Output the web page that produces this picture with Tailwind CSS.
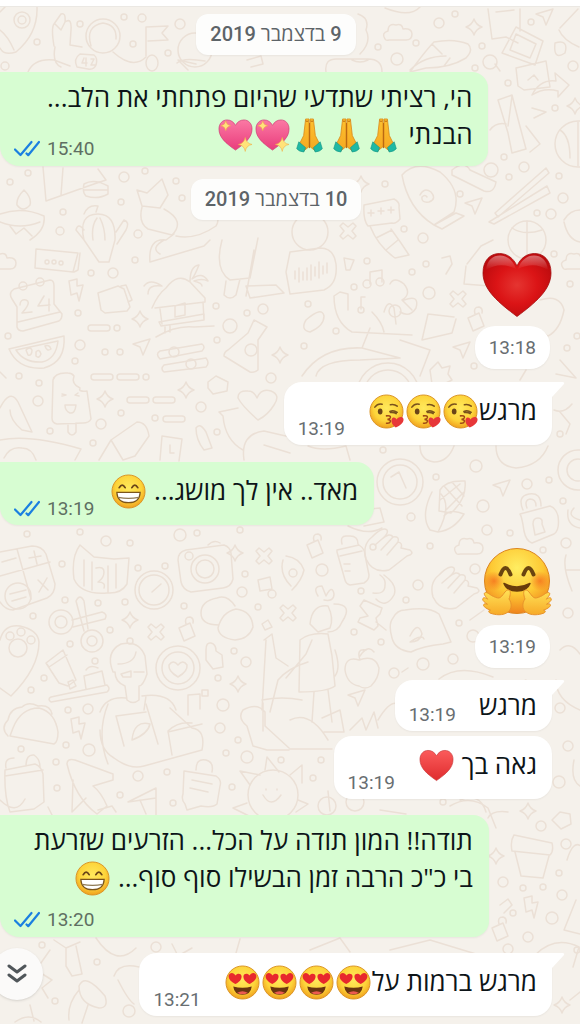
<!DOCTYPE html>
<html lang="he" dir="rtl">
<head>
<meta charset="utf-8">
<meta name="viewport" content="width=device-width, initial-scale=1">
<title>צ'אט</title>
<script src="https://cdn.jsdelivr.net/npm/@tailwindcss/browser@4"></script>
</head>
<body class="bg-[#f5f1eb] font-['Open_Sans','Noto_Sans',sans-serif] text-[#0d1418]">

<!-- Shared emoji and icon symbols -->
<svg class="absolute size-0" aria-hidden="true">
  <defs>
    <radialGradient id="face" cx=".5" cy=".4" r=".6"><stop offset="0" stop-color="#ffe95c"/><stop offset=".65" stop-color="#fdd43a"/><stop offset="1" stop-color="#f0a01e"/></radialGradient>
    <radialGradient id="hugface" cx=".5" cy=".3" r=".72"><stop offset="0" stop-color="#ffee62"/><stop offset=".55" stop-color="#fdc934"/><stop offset="1" stop-color="#ef7f1c"/></radialGradient>
    <radialGradient id="blush"><stop offset="0" stop-color="#f4691c" stop-opacity=".75"/><stop offset="1" stop-color="#f4691c" stop-opacity="0"/></radialGradient>
    <radialGradient id="deepred" cx=".5" cy=".5" r=".6"><stop offset="0" stop-color="#e53531"/><stop offset=".5" stop-color="#db1416"/><stop offset="1" stop-color="#b80a0d"/></radialGradient>
    <linearGradient id="gloss" x1="0" y1="0" x2="0" y2="1"><stop offset="0" stop-color="#fff" stop-opacity=".4"/><stop offset="1" stop-color="#fff" stop-opacity="0"/></linearGradient>
    <linearGradient id="softred" x1="0" y1="0" x2="0" y2="1"><stop offset="0" stop-color="#fb5b5b"/><stop offset="1" stop-color="#df2c2e"/></linearGradient>
    <linearGradient id="pink" x1="0" y1="0" x2="0" y2="1"><stop offset="0" stop-color="#fb79a4"/><stop offset="1" stop-color="#e93c7c"/></linearGradient>
    <linearGradient id="skin" x1="0" y1="0" x2="0" y2="1"><stop offset="0" stop-color="#fdc02f"/><stop offset="1" stop-color="#f5a922"/></linearGradient>
    <linearGradient id="palm" x1="0" y1="0" x2="0" y2="1"><stop offset="0" stop-color="#ffe257"/><stop offset="1" stop-color="#f7aa28"/></linearGradient>

    <symbol id="grin" viewBox="0 0 36 36">
      <circle cx="18" cy="18" r="17" fill="url(#face)" stroke="#d99325"/>
      <path d="M8.500 14q3-5 6 0M21.500 14q3-5 6 0" fill="none" stroke="#6a4518" stroke-width="1.900" stroke-linecap="round"/>
      <path d="M6 19h24q-.5 10.500-12 10.500T6 19z" fill="#fff" stroke="#7c551c" stroke-width="1.300"/>
      <path d="M7.500 24q10.500 2.200 21 0" fill="none" stroke="#8f7a55" stroke-width="1.200"/>
    </symbol>
    <symbol id="kiss" viewBox="0 0 36 36">
      <circle cx="18" cy="18" r="17" fill="url(#face)" stroke="#d99325"/>
      <ellipse cx="11.500" cy="18" rx="2.400" ry="3" fill="#6a4518"/>
      <path d="M6 13.500q3-4 7.500-3M22 11q4-1 7 1.500M21.500 18q3.500-2 7.500.8M22 19q4-.4 6 1.200" fill="none" stroke="#7a521c" stroke-width="1.600" stroke-linecap="round"/>
      <path d="M18 22.500q4.500-.6 4 1.800-.4 1.700-3 1.800 3.400.2 3 2.300-.6 2-4 1.600" fill="none" stroke="#a04a17" stroke-width="1.600" stroke-linecap="round"/>
      <path d="M27.500 34.500C23 31 22.500 27.800 23.500 25.500c1-2 4-1.700 4.800.8 1.200-2.300 5.500-3.800 7-1 1.200 3.200-2.600 7-7.800 9.200z" fill="#e73739"/>
    </symbol>
    <symbol id="love" viewBox="0 0 36 36">
      <circle cx="18" cy="18" r="17" fill="url(#face)" stroke="#d99325"/>
      <path d="M10.500 19.500C5.500 17 2.800 13.500 4 10.300c1.200-3 5.300-2.800 6.700.5 1.800-2.600 5.800-2.600 6.300.6.400 3.200-2.500 6.400-6.500 8.100zM25.500 19.500c5-2.500 7.700-6 6.500-9.200-1.200-3-5.300-2.800-6.700.5-1.800-2.600-5.800-2.600-6.300.6-.4 3.200 2.500 6.400 6.500 8.100z" fill="#e8282d"/>
      <path d="M8.500 22q9.500 3 19 0-1 8.500-9.500 8.500T8.500 22z" fill="#69350f"/>
      <path d="M12.500 28.600q5.500-3.300 11 0-5.500 3.200-11 0z" fill="#ec5a50"/>
    </symbol>
    <symbol id="heart" viewBox="0 0 36 36">
      <path d="M18 33.500C8 26.500 1 20.500 1 11.800 1 6 4.800 2.500 9.300 2.500c3.600 0 6.900 1.900 8.700 5.600 1.800-3.700 5.100-5.600 8.700-5.600C31.200 2.500 35 6 35 11.800c0 8.700-7 14.700-17 21.700z" fill="url(#softred)" stroke="#c9393b" stroke-width=".7"/>
    </symbol>
    <symbol id="sparkheart" viewBox="0 0 36 36">
      <path d="M18 33C8 26 1 20 1 11.300 1 5.500 4.800 2 9.300 2c3.600 0 6.900 1.900 8.700 5.600C19.800 3.900 23.100 2 26.700 2 31.200 2 35 5.500 35 11.300 35 20 28 26 18 33z" fill="url(#pink)" stroke="#cf3b74" stroke-width=".7"/>
      <path d="M8 3q.7 4.200 5 5-4.300.8-5 5-.7-4.200-5-5 4.300-.8 5-5zM28 20q1 6 7 7.200-6 1-7 7.200-1-6.200-7-7.200 6-1.200 7-7.200z" fill="#ffe37a" stroke="#f0b04a" stroke-width=".6"/>
    </symbol>
    <symbol id="pray" viewBox="0 0 36 36">
      <path d="M14 1h3.500v28.500l-5 4L7.500 27 12 18zM22 1h-3.500v28.500l5 4 5-6.500-4.500-9z" fill="url(#skin)" stroke="#d98618" stroke-width=".8" stroke-linejoin="round"/>
      <path d="M18 5v26M14 3q1.500 1 3 0M19 3q1.500 1 3 0" fill="none" stroke="#b9660f" stroke-width="1"/>
      <path d="M7 24.500l7 6-1.800 4.500Q7 34.500 4.800 31.500zM29 24.500l-7 6 1.800 4.500q5.200-.5 7.400-3.500z" fill="#1fb9a4" stroke="#13917f" stroke-width=".6"/>
    </symbol>
    <symbol id="bigheart" viewBox="0 0 70 66">
      <path d="M35 64.500C17 51 1 38 1 21 1 8.500 8 1.500 17.500 1.500 25 1.500 31.500 6 35 14 38.500 6 45 1.500 52.500 1.500 62 1.500 69 8.500 69 21c0 17-16 30-34 43.500z" fill="url(#deepred)" stroke="#a50d0e" stroke-width=".8"/>
      <path d="M4 18C5 8 11 3.500 18 3.500S31 8 34 17Q18 9 4 18zM66 18C65 8 59 3.500 52 3.500S39 8 36 17q16-8 30 1z" fill="url(#gloss)"/>
    </symbol>
    <symbol id="hug" viewBox="0 0 70 70">
      <circle cx="35" cy="34" r="32.500" fill="url(#hugface)" stroke="#dc8520"/>
      <circle cx="12" cy="34" r="10" fill="url(#blush)"/><circle cx="58" cy="34" r="10" fill="url(#blush)"/>
      <path d="M18.500 27.500q5-13 10 0M41.500 27.500q5-13 10 0" fill="none" stroke="#6a4510" stroke-width="4" stroke-linecap="round"/>
      <path d="M22 36.500q13 7 26 0-3 7.500-13 7.500t-13-7.500z" fill="#6a3c0b" stroke="#6a3c0b" stroke-width="1.500" stroke-linejoin="round"/>
      <g fill="url(#palm)" stroke="#e8932a" stroke-linejoin="round">
        <path id="palmshape" d="M27 43c2 1 1.500 5 0 9 3 4 3 10-1 13-5 4-13 3-18 1-2-1-1.500-3 .5-2.800C5 62 2 60 1.500 58.500c0-2 2-2 4-1.200C3 55.500.5 54 .7 52c.6-2 2.800-1.400 5 .2C4 50 1.500 47.500 2.500 46c1.500-1.500 4 .5 7 2.500 3 1.500 5 2.500 7.500 2.500 4-1 6-9 10-8z"/>
        <use href="#palmshape" transform="matrix(-1 0 0 1 70 0)"/>
      </g>
    </symbol>
    <symbol id="ticks" viewBox="0 0 26 18">
      <path d="M1 9.500L6.500 15 17.500 2M12.500 13.500l1.700 1.700L25 2" fill="none" stroke="#1b7fe0" stroke-width="2.200" stroke-linecap="round" stroke-linejoin="round"/>
    </symbol>
  </defs>
</svg>

<main class="relative flex min-h-screen flex-col overflow-hidden">

  <!-- Doodle wallpaper -->
  <svg class="absolute inset-0 h-full w-full" viewBox="0 0 580 1024" preserveAspectRatio="xMidYMin slice" fill="none" stroke="#ebe0d6" stroke-width="1.500" stroke-linecap="round" stroke-linejoin="round" aria-hidden="true">
    <defs>
      <path id="d-star" d="M0-8Q2-2 8 0 2 2 0 8-2 2-8 0-2-2 0-8z"/>
      <path id="d-arrow" d="M-9-3L8-8 1 8-2 0z"/>
      <path id="d-cross" d="M-8-5l3-3 5 4 5-4 3 3-4 5 4 5-3 3-5-4-5 4-3-3 4-5z"/>
      <path id="d-cloud" d="M-13 6q-4-6 3-8 0-8 8-6 6-2 7 4 9-1 9 5t-6 6h-17q-3 1-4-1z"/>
      <path id="d-bolt" d="M-7-9l8-2 0 7 6-1-4 16-2-8-6 2z"/>
      <path id="d-lock" d="M-7-3L4-8l5 13-11 5zM0-7q-2-7 4-7 4 1 3 6"/>
      <path id="d-hand" d="M-19 8Q-23-6-13-14-2-25 2-21 4-18-3-12q8-7 11-2 7-1 5 5 5 1 3 6l9 2q5 4-3 6Q8 16 4 19-12 23-19 8zM-3-12l-7 6M8-14L-4-1M13-9L2 4"/>
    </defs>
    <!-- Dots -->
    <g>
      <circle cx="37" cy="42" r="3"/><circle cx="80" cy="24" r="3"/><circle cx="124" cy="17" r="3"/><circle cx="142" cy="18" r="4"/><circle cx="133" cy="44" r="3"/><circle cx="168" cy="53" r="3"/><circle cx="180" cy="24" r="5"/><circle cx="5" cy="66" r="4"/>
      <circle cx="439" cy="23" r="5"/><circle cx="378" cy="47" r="3"/><circle cx="416" cy="43" r="3"/><circle cx="397" cy="59" r="6"/><circle cx="455" cy="14" r="3"/><circle cx="482" cy="46" r="3"/><circle cx="475" cy="68" r="3"/><circle cx="531" cy="22" r="3"/><circle cx="573" cy="66" r="5"/><circle cx="508" cy="83" r="3"/><circle cx="555" cy="108" r="3"/><circle cx="504" cy="157" r="3"/><circle cx="524" cy="167" r="5"/><circle cx="491" cy="170" r="7"/><circle cx="509" cy="177" r="3"/><circle cx="559" cy="176" r="3"/><circle cx="563" cy="198" r="5"/><circle cx="460" cy="194" r="3"/><circle cx="385" cy="184" r="3"/><circle cx="537" cy="213" r="3"/><circle cx="551" cy="214" r="5"/><circle cx="404" cy="229" r="3"/><circle cx="423" cy="238" r="5"/>
      <circle cx="10" cy="182" r="3"/><circle cx="28" cy="173" r="3"/><circle cx="124" cy="177" r="5"/><circle cx="145" cy="171" r="3"/><circle cx="176" cy="181" r="3"/><circle cx="121" cy="202" r="3"/><circle cx="182" cy="198" r="3"/><circle cx="63" cy="212" r="3"/><circle cx="60" cy="231" r="4"/><circle cx="138" cy="234" r="4"/>
      <circle cx="91" cy="273" r="3"/><circle cx="113" cy="273" r="5"/><circle cx="135" cy="260" r="3"/><circle cx="78" cy="313" r="3"/><circle cx="117" cy="328" r="3"/><circle cx="8" cy="336" r="3"/><circle cx="80" cy="345" r="5"/><circle cx="75" cy="361" r="3"/><circle cx="105" cy="352" r="3"/><circle cx="120" cy="352" r="3"/><circle cx="19" cy="376" r="3"/><circle cx="39" cy="383" r="3"/><circle cx="146" cy="377" r="3"/><circle cx="38" cy="401" r="5"/><circle cx="121" cy="413" r="3"/><circle cx="101" cy="424" r="5"/><circle cx="50" cy="431" r="3"/><circle cx="93" cy="443" r="3"/><circle cx="155" cy="418" r="3"/><circle cx="201" cy="407" r="5"/><circle cx="217" cy="432" r="3"/><circle cx="216" cy="306" r="3"/><circle cx="230" cy="326" r="7"/><circle cx="247" cy="313" r="3"/><circle cx="263" cy="309" r="5"/><circle cx="217" cy="340" r="3"/><circle cx="271" cy="378" r="5"/>
      <circle cx="367" cy="261" r="3"/><circle cx="354" cy="287" r="3"/><circle cx="308" cy="304" r="3"/><circle cx="336" cy="331" r="3"/><circle cx="304" cy="346" r="3"/><circle cx="412" cy="272" r="3"/><circle cx="426" cy="264" r="3"/><circle cx="429" cy="293" r="6"/><circle cx="554" cy="254" r="3"/><circle cx="570" cy="284" r="3"/><circle cx="567" cy="348" r="3"/><circle cx="577" cy="336" r="3"/><circle cx="474" cy="366" r="3"/><circle cx="560" cy="434" r="3"/><circle cx="383" cy="450" r="3"/><circle cx="476" cy="466" r="6"/><circle cx="436" cy="477" r="3"/><circle cx="527" cy="484" r="5"/><circle cx="549" cy="480" r="3"/><circle cx="483" cy="506" r="6"/><circle cx="411" cy="517" r="4"/><circle cx="487" cy="530" r="5"/><circle cx="510" cy="533" r="3"/><circle cx="563" cy="501" r="3"/><circle cx="566" cy="543" r="5"/><circle cx="543" cy="550" r="3"/><circle cx="430" cy="546" r="3"/><circle cx="475" cy="569" r="5"/><circle cx="418" cy="585" r="5"/><circle cx="406" cy="600" r="3"/><circle cx="373" cy="547" r="3"/><circle cx="322" cy="570" r="6"/><circle cx="361" cy="591" r="3"/><circle cx="354" cy="632" r="3"/><circle cx="381" cy="642" r="3"/><circle cx="459" cy="623" r="3"/><circle cx="473" cy="636" r="6"/><circle cx="423" cy="664" r="6"/><circle cx="453" cy="659" r="5"/><circle cx="394" cy="673" r="5"/><circle cx="568" cy="613" r="5"/>
      <circle cx="27" cy="534" r="3"/><circle cx="80" cy="532" r="3"/><circle cx="106" cy="541" r="5"/><circle cx="130" cy="543" r="3"/><circle cx="180" cy="535" r="6"/><circle cx="197" cy="533" r="3"/><circle cx="240" cy="530" r="3"/><circle cx="62" cy="564" r="3"/><circle cx="138" cy="568" r="3"/><circle cx="165" cy="566" r="3"/><circle cx="245" cy="574" r="3"/><circle cx="242" cy="592" r="5"/><circle cx="65" cy="600" r="3"/><circle cx="98" cy="603" r="3"/><circle cx="125" cy="602" r="3"/><circle cx="184" cy="606" r="3"/><circle cx="258" cy="607" r="3"/><circle cx="33" cy="616" r="3"/><circle cx="110" cy="630" r="3"/><circle cx="130" cy="641" r="3"/><circle cx="70" cy="644" r="3"/><circle cx="95" cy="661" r="3"/><circle cx="44" cy="678" r="3"/><circle cx="31" cy="690" r="3"/><circle cx="234" cy="651" r="3"/><circle cx="246" cy="662" r="5"/><circle cx="218" cy="678" r="3"/><circle cx="223" cy="705" r="6"/>
      <circle cx="68" cy="710" r="3"/><circle cx="88" cy="709" r="5"/><circle cx="66" cy="745" r="3"/><circle cx="89" cy="750" r="6"/><circle cx="21" cy="749" r="3"/><circle cx="56" cy="762" r="3"/><circle cx="57" cy="788" r="3"/><circle cx="138" cy="776" r="5"/><circle cx="167" cy="772" r="3"/><circle cx="120" cy="795" r="3"/><circle cx="173" cy="803" r="3"/><circle cx="220" cy="728" r="5"/><circle cx="238" cy="740" r="3"/><circle cx="226" cy="753" r="3"/><circle cx="247" cy="757" r="6"/><circle cx="281" cy="760" r="3"/><circle cx="232" cy="787" r="3"/><circle cx="313" cy="778" r="3"/><circle cx="321" cy="760" r="3"/><circle cx="560" cy="708" r="5"/><circle cx="568" cy="746" r="5"/><circle cx="559" cy="782" r="6"/><circle cx="443" cy="802" r="3"/><circle cx="541" cy="826" r="5"/><circle cx="566" cy="844" r="5"/><circle cx="559" cy="873" r="3"/><circle cx="503" cy="882" r="5"/><circle cx="523" cy="888" r="3"/><circle cx="543" cy="887" r="3"/><circle cx="562" cy="895" r="5"/><circle cx="513" cy="913" r="3"/><circle cx="552" cy="918" r="6"/><circle cx="528" cy="937" r="5"/><circle cx="508" cy="949" r="5"/><circle cx="577" cy="950" r="3"/><circle cx="42" cy="945" r="3"/><circle cx="97" cy="962" r="3"/><circle cx="55" cy="1001" r="3"/><circle cx="129" cy="1011" r="6"/><circle cx="156" cy="947" r="5"/>
    </g>
    <!-- Sparkles, arrows, crosses, clouds, bolts -->
    <use href="#d-star" x="474" y="27"/><use href="#d-star" x="575" y="106"/><use href="#d-star" x="140" y="319"/><use href="#d-star" x="105" y="399"/><use href="#d-star" x="186" y="390"/><use href="#d-star" x="280" y="355"/><use href="#d-star" x="235" y="553"/><use href="#d-star" x="130" y="620"/><use href="#d-star" x="238" y="684"/><use href="#d-star" x="528" y="811"/><use href="#d-star" x="496" y="856"/><use href="#d-star" x="562" y="1005"/><use href="#d-star" x="361" y="184"/>
    <use href="#d-arrow" x="545" y="17"/><use href="#d-arrow" x="474" y="206"/><use href="#d-arrow" x="142" y="347"/><use href="#d-arrow" x="462" y="350"/><use href="#d-arrow" x="502" y="488"/><use href="#d-arrow" x="357" y="698"/>
    <use href="#d-cross" x="458" y="299"/><use href="#d-cross" x="264" y="556"/><use href="#d-cross" x="156" y="632"/><use href="#d-cross" x="348" y="231"/><use href="#d-cross" x="288" y="613"/>
    <use href="#d-cloud" x="398" y="33"/><use href="#d-cloud" x="469" y="547"/><use href="#d-cloud" x="576" y="262"/><use href="#d-cloud" x="2" y="262"/>
    <use href="#d-bolt" x="76" y="290"/><use href="#d-bolt" x="78" y="728"/><use href="#d-bolt" x="531" y="907"/>
    <use href="#d-lock" x="186" y="631"/><use href="#d-lock" x="475" y="321"/><use href="#d-lock" x="314" y="548"/><use href="#d-lock" x="499" y="931"/>
    <use href="#d-hand" x="385" y="551"/><use href="#d-hand" x="452" y="589"/>
    <!-- Rocket, astronaut, flag, planet -->
    <circle cx="22" cy="20" r="8"/><circle cx="22" cy="20" r="4"/>
    <path d="M0 48q4 8 16 4Q38 34 37 7M0 12l5-5M0 30q8 6 14 20M28 72q6-14 26-12l16 6M54 46q-3-18 0-22l7-10q5-2 4 8 7-5 6 8l-1 15 12 2M55 47q-3 16 6 20M55 24l6 6 4-8"/>
    <circle cx="103" cy="36" r="17"/><path d="M91 46q-6-20 12-23 14 2 13 16M113 52q20 18 33 5M80 54l14 1q4 3 2 10-2 5-8 4l-11-2q-4-8 3-13zM84 58l-2 5h5M86 58v8M91 59h3l-3 6h4M146 56V27l22-1-6 7 6 7-20 1"/>
    <ellipse cx="152" cy="63" rx="6" ry="8"/><circle cx="195" cy="50" r="17"/><path d="M177 63q6-6 28-2M188 70l-10-10 18 4M247 60l14-4 2 8-12 3M358 14q12 4 8 16 6 12-6 24M326 72q-2-14 12-13h30q14 0 14 13M352 60q8 4 16 0"/>
    <!-- Whale, photos, meteor -->
    <path d="M385 8q25 10 35-1M410 72q16-22 24-30 20-4 34 2 6 6-2 14-16 10-40 10zM410 70q14-14 36-14M432 44l10 10M450 58l-6 8M488 9l4 30 14-2 12 6M520 9v22M496 12l18-2M516 27l27 14-8 24-33-12zM516 34l20 10-6 14-20-8zM516 68l30-7 4 26-26 3-6-4zM528 80l6-5 4 5M560 28l18-19M559 30q4 10 20 17M555 43q14-4 10 10-12 8-10-10zM532 95q8-16 24-14l-1-8 14 12-11 12v-6q-14-4-26 4M495 64l5 7M498 100l14-5 6 24 8 30-14 4-4-20zM512 96l-4 30M490 130q6-8 16-6M532 108l14 4-12 6M526 126l14 18-10 8"/>
    <circle cx="490" cy="62" r="7"/><circle cx="578" cy="144" r="23"/><path d="M560 130q10 6 10 28M578 122v44"/>
    <!-- Cap, shoe, candle, fox, cactus -->
    <path d="M43 167l3 34 48-17 12-4-8-11M63 168l-2 27M84 184q10-6 24 2v8q-10 6-22 2-4-4-2-12zM84 190h24M24 190q-8 8-7 15 6 8 13 0 2-7-6-15zM0 214q22-8 44 2 2 14-14 24M0 222q20 8 40 0M10 226l6 8 8-6 8 8M137 190l10 3 15-14 6 16-8 13-18-2zM142 207q-4 16 6 22l24 6q14-14-8-26M176 236q20 4 40-10 6-10-6-16"/>
    <path d="M84 240q-6-26 14-26 18 0 17 26l-6 22h-10zM93 240q-2-14 4-22M105 240q0-12-5-22M84 214q4-10 14-8l-2 6M116 232l8-12q6 2 2 10l-9 14M84 240l-8-10q2-8 8 0M150 262q-2-24 16-22l8-6M150 262l54-16 6-6M164 240q-14 8-4 14"/>
    <!-- Vase, stars box, chopsticks, ball -->
    <path d="M402 175q14-16 38-3 22 18 14 40l-20 13q-26-16-32-50zM434 225l22-12 8 3-22 13zM420 195q4-8 11-3 6 7-2 10-8 1-7-5 3-3 5 0M452 170q12-10 18 0l26 12q-2 12-12 9l-32-16zM364 205l30-6q6 3 5 8l1 12q-4 5-8 4l-24 3q-5-6-4-21zM371 210v6M368 213h6M381 208v6M378 211h6M391 207v6M388 210h6M495 213l51-45 3 5-51 44zM489 222l58-36 3 7-56 31zM340 200l14-6 4 6 0 10-12 4-6-6z"/>
    <circle cx="527" cy="240" r="19"/><path d="M512 228q12 8 30 2M527 221v38"/><circle cx="310" cy="232" r="18"/><path d="M564 220q6-10 16-10M564 222q4 18 16 20"/>
    <!-- Chat box, calendar, card, hut -->
    <path d="M36 249l42 4-5 19-38-4zM74 272l4-2 2-17M14 289l36-9q4 0 4 6v18l8 10q0 5-3 7l-36 10q-5 0-6-4v-20l-5-8q-4-6 2-10zM18 322l42-10M20 305q0-6 6-5 6 2-4 13l10-1M44 296l-6 10 12-1M49 299v12"/>
    <circle cx="47" cy="262" r="2"/><circle cx="54" cy="262" r="2"/><circle cx="61" cy="263" r="2"/><circle cx="23" cy="286" r="4"/><circle cx="40" cy="282" r="4"/>
    <path d="M98 293l20-7 6 3 6 18-3 4-22 2-4-3zM121 286l5-1 6 15-4 2M152 308q6-14 14-20 12-16 24-6l15 16v4l-50 6M160 309l2 15M203 302l1 18M159 322l45-8v6l-43 6zM165 327v6M170 326v6M175 306l10-3v12l-10 2zM156 337q20-12 38-10l20-1M144 286q6-8 18 0-14-2-14 8M190 282q0-16 9-17-4 10-7 14 10-8 16 2-6-3-14 0 8 2 8 5"/>
    <!-- Melon, morse strips, ice pop, keys -->
    <path d="M9 349l55-13q2 26-20 32-26 2-35-19zM16 350l42-9q-2 18-16 21-18 1-26-12zM26 350q4-4 6 0 0 6-4 5zM36 352q3-4 5 2-2 5-5 2zM45 346q4-2 6 3-4 3-6-3zM53 380q2-8 15-7 4 0 6 3-3 8 6 12-2 4 7 3l4 28q-2 4-8 4l-26 1q-5-1-5-6zM68 424v8q4 6 8 0v-9M62 394l4 1-4 1M78 393l-3 2 4 1M65 405h11q-1 9-6 8-5-2-5-8z"/>
    <rect x="88" y="325" width="22" height="6" rx="3"/><rect x="91" y="374" width="22" height="6" rx="3"/><rect x="117" y="374" width="22" height="6" rx="3"/><rect x="127" y="397" width="22" height="6" rx="3"/><rect x="153" y="397" width="22" height="6" rx="3"/><rect x="163" y="416" width="22" height="6" rx="3"/>
    <path d="M160 351l42-7q4 3 0 7l-42 8q-5-5 0-8zM164 365l42-7q4 5 0 9l-42 5q-4-3 0-7zM208 382l8-6 12 6-1 9-14 3-5-6zM254 320l13 7-9 13v30q-4 3-8 2l-26-16q0-4 4-6l20-17z"/><circle cx="174" cy="352" r="5"/><circle cx="191" cy="364" r="5"/><circle cx="251" cy="350" r="6"/>
    <path d="M258 420q-16-14-20-22 0-8 10-7 6 0 9 7 4-10 14-7 10 4 3 14-6 10-16 15zM238 408l-19 4 4 4q2 24 20 34M244 460q-4-26 20-29l26 6M264 445l26 8M0 440q30-6 81 9l-6 11M4 458q6-12 18-10 10 0 14 12M111 440l26-18q10 0 12 14l-14 20-12 4zM111 440l-12 20M162 436l20 3-3 22M162 436l-2 24M170 445v8h4M196 428q4-6 10 4l6 16-8 2q-8-10-8-22M0 408q10-20 18-6l14 30-10-2q-12-10-12-20M0 372l6 6"/>
    <!-- Seated figure, waveform bubble, shell -->
    <path d="M222 240q-8 30 8 40l20-2 8-40M226 281l-2 14q6 6 12 0l4-16M246 286l30-1 8 8-34 5zM254 250l-8 46M290 252l30-4q14 0 16 16 2 20-12 26l-34 4-4-22zM295 271v8M299 268v14M303 272v8M307 268v12M311 265v15M315 267v9M319 262v16M323 266v8M327 263v10M370 226q8 20 25 32l14-3-8-12-10-14M376 238l16-8M386 250l12-10M344 258l10 2-4 10h-4zM442 258l8-2 2 8-6 10M467 264l14-18 12-6M466 266l-2 18 26 2"/>
    <!-- Music, juggler, wheel -->
    <path d="M370 284v-12l12-2v12M361 309v-12l4 0M334 296q0 26 18 36l60 3M334 296l6-4 8 2v16M390 284q4-8 14 0 8 10-2 16l10 10M384 312q4-14 10-4l2 16M404 300q16-6 12 8-6 10-16 4M428 314l26 3M428 314l-6 26 30-7 4-14M362 348l8-20M400 340l30 10-10 26M302 376q20-30 60-28l38 10-40 2q-40 0-44 16M306 320q16-14 18-4 0 10-14 16-10-2-4-12M372 312q10 10 12 20"/><circle cx="367" cy="284" r="4"/><circle cx="380" cy="282" r="4"/><circle cx="361" cy="310" r="3"/><circle cx="395" cy="311" r="6"/><circle cx="388" cy="394" r="31"/><circle cx="388" cy="394" r="24"/>
    <path d="M430 370l8-8 4 6 8-2-2 8 4 6-8 4-6 6-6-6zM520 380l6-10M540 300q20-6 24 10-4 20-16 26l-12-8M560 360l16 18-20-4M308 446q14 6 38 0l4 14M420 446q0 14 14 16 14 0 20-16M554 410q10 4 18-6M560 412l10 12-4 10M496 446q0 20 20 22 24-2 32-22"/><circle cx="578" cy="470" r="20"/><circle cx="578" cy="470" r="11"/>
    <!-- Coin, corn, padlock, bottle -->
    <circle cx="400" cy="482" r="23"/><circle cx="400" cy="482" r="17"/><path d="M391 477l8-5 7 16M440 490q6-10 25-9 2 18-14 32l-12-2zM444 486l18 20M452 482l12 14M440 500l20-16M446 510l18-18M432 492q-12 24-2 38l8 2q14-26 3-38M438 532q16-2 26-18-14-6-20 2M520 514l30-8q6 2 8 10 2 14-4 18l-22 9q-6-2-8-12-2-14-4-17zM523 510q-6-14 6-16 12-2 12 12M527 508q-3-8 3-9 6 0 6 7M533 524q0-6 5-6t4 6l3 8-10 3zM568 510q-2 16 12 18M574 508q-8 8 6 12M337 550l22-5q6 4 6 10l4 20q0 5-5 8l-14 2q-4-1-5-5l-8-28zM340 556l22-5M342 544q-2-8 4-8l4 0q8 0 8 8M344 564h6M345 571h5M380 575q6 4 5 10 0 10-12 8M384 575q14 10 10 20-8 14-18 4M348 526q20 10 34 2M360 510l20-2 4 14-20 4"/>
    <!-- Cat mask, calculator, dial, camera, dumplings -->
    <path d="M80 545l14 12 20 2 15-1-2 26q-6 10-20 9-26 2-33-14-3-22 6-34zM84 560v26M92 562v28M108 566v26M116 564v24M96 568q8-2 8 4t-6 10q8 0 6 6M0 552l32-6q10 0 14 8l9 30q0 10-8 14l-34 12q-8 0-13-8M17 549l14 50M0 576l50-14M29 558l12-2M34 551l3 13M38 580l10 10M47 578l-8 14M2 562l14-4"/>
    <circle cx="18" cy="596" r="13"/><path d="M10 594l16-4M12 601l14-4"/><circle cx="154" cy="590" r="19"/><circle cx="154" cy="590" r="15"/><path d="M152 592l9-8"/>
    <path d="M178 560q0-8 8-10l38-5q6 2 7 8l2 26q-2 8-10 9l-32 4q-8-2-10-10zM208 545q6-6 12-2"/><circle cx="205" cy="569" r="14"/><circle cx="205" cy="569" r="9"/><circle cx="189" cy="556" r="4"/>
    <path d="M219 625q-18 0-18-12t16-15q10-4 18 8M218 628q4-16 18-19 16 2 17 18-4 12-18 13-16-2-17-12zM258 580l12-3 2 12-12 2zM262 624l6-4 4 7-7 3zM283 560q-4 14 8 26M286 556q14 2 18 14-2 10-12 20"/><circle cx="272" cy="594" r="4"/><circle cx="293" cy="573" r="4"/>
    <!-- Scissors, paw, cup, scholar, heart medal -->
    <circle cx="61" cy="622" r="12"/><circle cx="61" cy="622" r="6"/><circle cx="92" cy="641" r="11"/><circle cx="92" cy="641" r="5"/><path d="M72 620l30-8q6 2 3 7l-32 8M84 631l-8-30q4-8 8 0l4 28M0 640q4-16 20-14 18 4 19 16 0 26-28 54L0 688"/><circle cx="18" cy="648" r="9"/><circle cx="10" cy="636" r="4"/><circle cx="21" cy="632" r="4"/><circle cx="31" cy="640" r="4"/>
    <path d="M46 663l17-13 13 30-8 6-9-3zM46 663l3 4 18-12M68 682l5-2 3 6-6 3zM51 697l56-12q4 4 0 7l-56 10q-4-3 0-5zM84 676l18-5 3 14M84 676l2 13M86 670q4-6 12-2"/>
    <path d="M113 672q-8-20 8-28 18-4 24 12l2 18q-4 12-8 12v14q-6 5-12 0l-2-14q-10-4-10-14zM118 664q16 0 18-12M121 674l10-3v6h-8zM134 672h10M100 712q6-16 26-14M142 696q28-4 34 14M146 696l-2 14"/>
    <circle cx="178" cy="668" r="22"/><circle cx="178" cy="668" r="16"/><path d="M178 677q-10-6-9-12 4-6 9 0 5-6 9 0 1 6-9 12zM206 650q0-8 5-7t5 8l6 4 1 12-10 2-7-9zM188 695l12-1v15M188 695v20M202 690l6 0v6h-6z"/>
    <!-- Woman planting, pin, speech bubble, apple -->
    <path d="M310 624q2-20 18-18 6 12 2 22l-12 4zM318 596q-6-10 4-10l4 10q6-12 8-2 0 8-10 6M334 604q20 0 8 18-4 10-14 10M300 640q10-8 28-6l4 22 3 30q-8 6-36 6zM312 640l-6 14-20 24M270 712l8-32q10-12 30-18M314 692l-2 30M328 690l4 32M335 650q6 18 0 26M264 640l8-6 4 24 12 8M266 640l-4 70M262 700q20-4 40 0"/>
    <path d="M360 606l4-6 18 8-2 6-4 4 2 8-4 4-16-8 2-4 8-2zM376 622l10 8M393 618q4-8 12-8 24-4 34 4l12 28-8 2q-20 2-32 8-16-2-19-14-4-14 1-20zM410 636q8-16 12-2-2 8-12 8 12-8 14-3M345 670q0-14 14-10 16-6 20 8 0 10-8 18-6 4-12 0-12-2-14-16zM360 660q-4-12 6-10M360 656q8-12 14-4M408 668l-6 4M439 679q20-16 54-2M486 698l40-18M470 620l14-10M560 650q10-10 20 4M556 680q0 20 24 30M566 555q-4 12 6 36M566 570h14"/>
    <!-- Taco, backpack, spaceship, books, laptop -->
    <path d="M13 728q8-20 26-20 16 4 19 24 0 10-4 12l-44-8zM8 736q-8-8 0-16 2-12 14-13 6-6 16-1 12-2 14 8M5 770l30-6q6 2 8 10l1 28-10 7-24 3q-6-16-5-42zM5 776l38-6M26 766q0-12 8-11 6 4 6 12M0 800q16 16 25-1M6 768q-2-10 8-10M67 764q0-6 8-4l38 14v6l-20 6q8 6 14 20l-10 8q-22-16-30-50zM73 780l-1 32 14-14M98 810l14-4 4 6M128 802l28-14v30M128 802l28-4M140 800l6 14M184 771l32 5q6 4 4 10l-3 18q-4 4-16 2l-14 4-2-6q-4-4-2-10zM196 770q0-12 10-10 8 2 6 12M192 780l20 4M190 788l18 4M108 704q-12 30 0 60M100 730q0 20 14 28 16 12 30 8l58-16q4-20-10-22l-22-20M124 746l-8-30 30-4M146 704l12 40M168 732l34-8M172 755l-4-24q10-10 24-8M132 740q2-20 18-16-2 10-18 16M48 807l6 12"/>
    <!-- Sandwich, sun, field -->
    <circle cx="273" cy="795" r="25"/><path d="M263 795q8 14 18 0M266 789v1M277 789v1M250 785l-10-14 20 4M265 770l2-13 12 15M247 803l-14 5 16 8M290 775l12-10 0 18M298 800l10 4-12 8M243 710q14-8 22 2l0 14 24 22M243 710q-6 8 4 16l6 20 14 4h22M263 703l0 28M290 720q20-10 38 20M322 718l18-8 4 22h-20M290 749h42M350 730l12-12 4 12 8-18 4 16M378 720q12-20 20-16"/>
    <!-- Plant pot and lower right -->
    <path d="M514 835l38 8q2 8-2 12l-38-4q-2-10 2-16zM515 852l6 24 22 2 6-22M552 820l8-8 10 2 1 10-10 5zM567 860q6-20 14-14M576 900l-12 30 16 4M574 760q-4 20 6 26M450 806q20-12 38 2l8 20M488 818q4-8 20-6M460 800q20-8 26 12M380 810l26 4M330 811l-2-20M500 905l8-6 4 6-8 8M535 955q20-20 44-8l-6 20M310 950l30-12 10 14M390 950l40-10 46 14"/><circle cx="327" cy="806" r="9"/><circle cx="355" cy="802" r="9"/>
    <!-- Mushroom, carrot, tree and lower left -->
    <path d="M79 986q6-14 26 10 4 12-6 12-20-4-20-22zM79 990q-12 14-10 30M88 1005l-6 18M54 940l12 8 14-6M66 948l0 18 6 10 10-2-6-28M114 976q4-12 20-10l20 4M118 980q10 20 16 24M50 950l-14 20 16 10-10 8 6 10M96 938q20 30 40 10M30 1005l4 16M172 944l6 12 14-8M240 939l-4 14M15 1022q14-10 26 0M570 1000l10-8"/>
  </svg>

  <header class="relative h-[7px] border-b border-[#ebe8e3] bg-white"></header>

  <section class="relative flex flex-1 flex-col pt-[7px] pr-[28px] text-[26px] leading-[37px]">
    <time class="self-center rounded-xl bg-[#fdfdfc] px-[14px] font-['Roboto','Open_Sans',sans-serif] text-[20px] font-medium leading-[41px] text-[#5d6468] shadow-xs">9 בדצמבר 2019</time>

    <article class="mt-[17px] grid self-end rounded-2xl rounded-tl-none rounded-bl-[20px] bg-[#d7fdd2] pt-[7px] pr-4 pb-[5px] pl-[14px] shadow-xs">
      <p class="col-start-1 row-start-1 pb-2 pl-[33px]">הי, רציתי שתדעי שהיום פתחתי את הלב...<br>הבנתי <svg class="-my-1 mx-px inline-block size-[35px] align-[-5px]" role="img" aria-label="ידיים"><use href="#pray"/></svg><svg class="-my-1 mx-px inline-block size-[35px] align-[-5px]" role="img" aria-label="ידיים"><use href="#pray"/></svg><svg class="-my-1 mx-px inline-block size-[35px] align-[-5px]" role="img" aria-label="ידיים"><use href="#pray"/></svg><svg class="-my-1 mx-px inline-block size-[35px] align-[-5px]" role="img" aria-label="לב"><use href="#sparkheart"/></svg><svg class="-my-1 mx-px inline-block size-[35px] align-[-5px]" role="img" aria-label="לב"><use href="#sparkheart"/></svg></p>
      <div dir="ltr" class="col-start-1 row-start-1 flex items-center gap-[7px] self-end justify-self-end font-['Roboto',sans-serif] text-[19px] leading-6 text-[#5f6f62]"><svg class="h-[18px] w-[26px]"><use href="#ticks"/></svg><time>15:40</time></div>
    </article>

    <time class="mt-[13px] self-center rounded-xl bg-[#fdfdfc] px-[14px] font-['Roboto','Open_Sans',sans-serif] text-[20px] font-medium leading-[41px] text-[#5d6468] shadow-xs">10 בדצמבר 2019</time>

    <svg class="mt-[32px] h-[66px] w-[70px] self-start" role="img" aria-label="לב אדום"><use href="#bigheart"/></svg>
    <time class="mt-2 mr-0.5 self-start rounded-[20px] bg-white px-[14px] font-['Roboto',sans-serif] text-[19px] leading-[43px] text-[#686e71] shadow-xs">13:18</time>

    <article class="relative mt-[13px] flex items-end gap-[23px] self-start rounded-[18px] rounded-tr-none bg-white pt-[10px] pr-[15px] pb-[4px] pl-[14px] shadow-xs">
      <svg class="absolute top-0 -right-[13px] h-4 w-[14px]" viewBox="0 0 14 16" fill="#fff" aria-hidden="true"><path d="M0 0h12q2 .5 1 2L1 15H0z"/></svg>
      <p class="pb-[12px]">מרגש<svg class="-my-1 mx-px inline-block size-[35px] align-[-5px]" role="img" aria-label="נשיקה"><use href="#kiss"/></svg><svg class="-my-1 mx-px inline-block size-[35px] align-[-5px]" role="img" aria-label="נשיקה"><use href="#kiss"/></svg><svg class="-my-1 mx-px inline-block size-[35px] align-[-5px]" role="img" aria-label="נשיקה"><use href="#kiss"/></svg></p>
      <time class="font-['Roboto',sans-serif] text-[19px] leading-6 text-[#686e71]">13:19</time>
    </article>

    <article class="mt-[17px] flex items-end gap-[16px] self-end rounded-[18px] rounded-tl-none bg-[#d7fdd2] pt-[10px] pr-4 pb-[4px] pl-[14px] shadow-xs">
      <p class="pb-[12px]">מאד.. אין לך מושג... <svg class="-my-1 mx-px inline-block size-[35px] align-[-5px]" role="img" aria-label="חיוך"><use href="#grin"/></svg></p>
      <div dir="ltr" class="flex items-center gap-[7px] font-['Roboto',sans-serif] text-[19px] leading-6 text-[#5f6f62]"><svg class="h-[18px] w-[26px]"><use href="#ticks"/></svg><time>13:19</time></div>
    </article>

    <svg class="mt-[22px] size-[70px] self-start" role="img" aria-label="חיבוק"><use href="#hug"/></svg>
    <time class="mt-2 mr-0.5 self-start rounded-[20px] bg-white px-[14px] font-['Roboto',sans-serif] text-[19px] leading-[43px] text-[#686e71] shadow-xs">13:19</time>

    <article class="relative mt-[12px] flex items-end gap-[23px] self-start rounded-[18px] rounded-tr-none bg-white pt-[7px] pr-[15px] pb-[4px] pl-[14px] shadow-xs">
      <svg class="absolute top-0 -right-[13px] h-4 w-[14px]" viewBox="0 0 14 16" fill="#fff" aria-hidden="true"><path d="M0 0h12q2 .5 1 2L1 15H0z"/></svg>
      <p class="pb-[3px]">מרגש</p>
      <time class="font-['Roboto',sans-serif] text-[19px] leading-6 text-[#686e71]">13:19</time>
    </article>

    <article class="mt-[5px] flex items-end gap-[23px] self-start rounded-[18px] bg-white pt-[10px] pr-[15px] pb-[4px] pl-[14px] shadow-xs">
      <p class="pb-[12px]">גאה בך <svg class="-my-1 mx-px inline-block size-[35px] align-[-5px]" role="img" aria-label="לב"><use href="#heart"/></svg></p>
      <time class="font-['Roboto',sans-serif] text-[19px] leading-6 text-[#686e71]">13:19</time>
    </article>

    <article class="mt-[16px] flex flex-col self-end rounded-2xl rounded-tl-none rounded-bl-[20px] bg-[#d7fdd2] pt-[7px] pr-4 pb-[5px] pl-[14px] shadow-xs">
      <p class="pb-[12px] pl-[20px]">תודה!! המון תודה על הכל... הזרעים שזרעת<br>בי כ"כ הרבה זמן הבשילו סוף סוף... <svg class="-my-1 mx-px inline-block size-[35px] align-[-5px]" role="img" aria-label="חיוך"><use href="#grin"/></svg></p>
      <div dir="ltr" class="flex items-center gap-[7px] self-end font-['Roboto',sans-serif] text-[19px] leading-6 text-[#5f6f62]"><svg class="h-[18px] w-[26px]"><use href="#ticks"/></svg><time>13:20</time></div>
    </article>

    <article class="relative mt-[16px] flex items-end gap-[23px] self-start rounded-[18px] rounded-tr-none bg-white pt-[10px] pr-[15px] pb-[4px] pl-[14px] shadow-xs">
      <svg class="absolute top-0 -right-[13px] h-4 w-[14px]" viewBox="0 0 14 16" fill="#fff" aria-hidden="true"><path d="M0 0h12q2 .5 1 2L1 15H0z"/></svg>
      <p class="pb-[12px]">מרגש ברמות על<svg class="-my-1 mx-px inline-block size-[35px] align-[-5px]" role="img" aria-label="מאוהב"><use href="#love"/></svg><svg class="-my-1 mx-px inline-block size-[35px] align-[-5px]" role="img" aria-label="מאוהב"><use href="#love"/></svg><svg class="-my-1 mx-px inline-block size-[35px] align-[-5px]" role="img" aria-label="מאוהב"><use href="#love"/></svg><svg class="-my-1 mx-px inline-block size-[35px] align-[-5px]" role="img" aria-label="מאוהב"><use href="#love"/></svg></p>
      <time class="font-['Roboto',sans-serif] text-[19px] leading-6 text-[#686e71]">13:21</time>
    </article>
  </section>

  <button type="button" aria-label="גלילה למטה" class="absolute bottom-6 -left-[9px] flex size-[52px] items-center justify-center rounded-full bg-[#fbfaf9] shadow-sm">
    <svg class="h-[22px] w-[20px]" viewBox="0 0 20 22" fill="none" stroke="#50565a" stroke-width="3" stroke-linecap="round" stroke-linejoin="round"><path d="M2 3l8 6 8-6M2 12l8 6 8-6"/></svg>
  </button>
</main>
</body>
</html>
